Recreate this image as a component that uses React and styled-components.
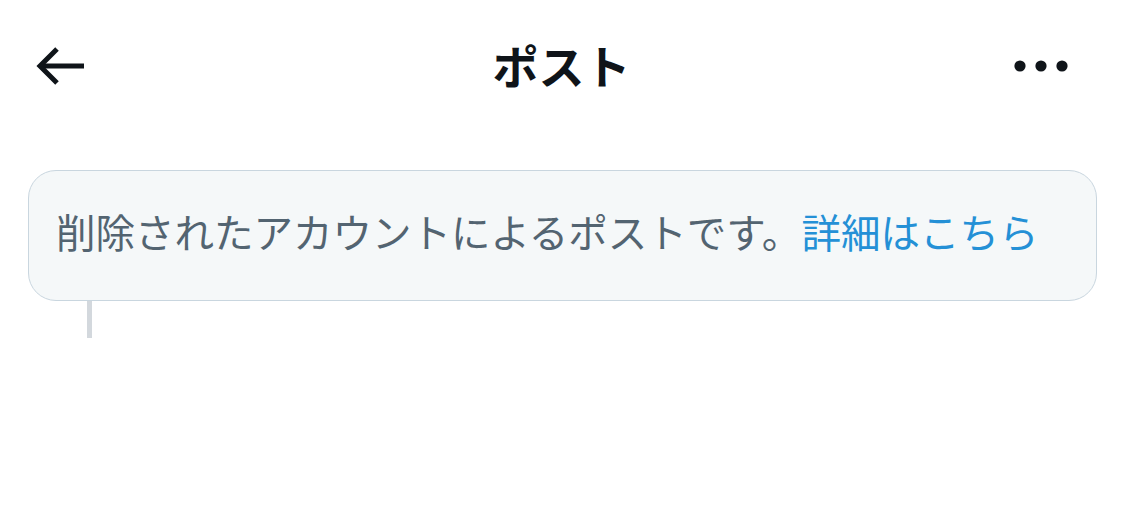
import React from 'react'
import styled, { createGlobalStyle } from 'styled-components'

const Global = createGlobalStyle`
  html, body {
    margin: 0;
    padding: 0;
    background: #ffffff;
    font-family: "Noto Sans CJK JP", "Noto Sans", sans-serif;
  }
`

function BackArrow() {
  return (
    <svg width="52" height="40" viewBox="0 0 52 40" fill="none">
      <path d="M50 20H6" stroke="#0f1419" strokeWidth="5" />
      <path d="M23 3L6 20L23 37" stroke="#0f1419" strokeWidth="5" strokeLinejoin="miter" />
    </svg>
  )
}

function MoreDots() {
  return (
    <svg width="56" height="14" viewBox="0 0 56 14">
      <circle cx="7" cy="7" r="5.6" fill="#0f1419" />
      <circle cx="28" cy="7" r="5.6" fill="#0f1419" />
      <circle cx="49" cy="7" r="5.6" fill="#0f1419" />
    </svg>
  )
}

export default function App() {
  return (
    <Page>
      <Global />
      <Header>
        <IconButton><BackArrow /></IconButton>
        <Title>ポスト</Title>
        <IconButton $right><MoreDots /></IconButton>
      </Header>
      <Main>
        <Notice>
          削除されたアカウントによるポストです。<Link>詳細はこちら</Link>
        </Notice>
        <Thread />
      </Main>
    </Page>
  )
}

const Page = styled.div`
  width: 1125px;
  height: 507px;
  background: #ffffff;
  overflow: hidden;
`

const Header = styled.div`
  height: 132px;
  display: grid;
  grid-template-columns: 1fr auto 1fr;
  align-items: center;
  padding: 0 56px 0 34px;
`

const IconButton = styled.div`
  display: flex;
  justify-content: ${p => (p.$right ? 'flex-end' : 'flex-start')};
  align-items: center;
`

const Title = styled.h1`
  margin: 0 0 4px;
  font-size: 46px;
  font-weight: 700;
  color: #0f1419;
  line-height: 1;
  padding-left: 20px;
`

const Main = styled.div`
  padding: 38px 28px 0;
`

const Notice = styled.div`
  height: 131px;
  box-sizing: border-box;
  border: 1px solid #c9d6df;
  border-radius: 28px;
  background: #f5f8f9;
  display: flex;
  align-items: center;
  padding: 0 0 10px 27px;
  font-size: 39.5px;
  color: #536471;
  white-space: nowrap;
`

const Link = styled.span`
  color: #2490d6;
`

const Thread = styled.div`
  width: 5px;
  height: 37px;
  margin-left: 59px;
  background: #d3d8dd;
`
